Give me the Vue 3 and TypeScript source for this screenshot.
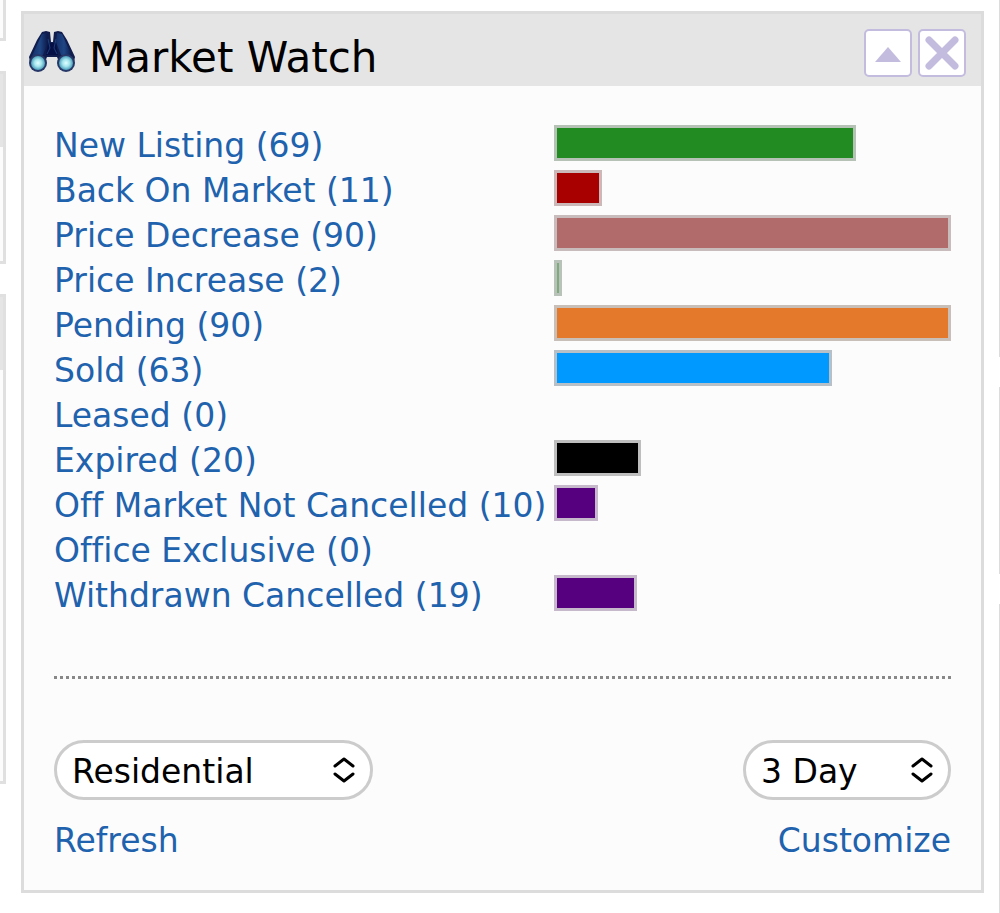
<script setup lang="ts">
import { ref } from 'vue'

interface Category {
  label: string
  count: number
  color: string
  edge: string
}

const categories: Category[] = [
  { label: 'New Listing', count: 69, color: '#228b22', edge: '#b7c2b7' },
  { label: 'Back On Market', count: 11, color: '#a80000', edge: '#cbb9b9' },
  { label: 'Price Decrease', count: 90, color: '#b26b6b', edge: '#c8bcbc' },
  { label: 'Price Increase', count: 2, color: '#7eaa7e', edge: '#b9c2b9' },
  { label: 'Pending', count: 90, color: '#e4792b', edge: '#c8bfb8' },
  { label: 'Sold', count: 63, color: '#0099ff', edge: '#b7bfc7' },
  { label: 'Leased', count: 0, color: '#808080', edge: '#c0c0c0' },
  { label: 'Expired', count: 20, color: '#000000', edge: '#bebebe' },
  { label: 'Off Market Not Cancelled', count: 10, color: '#560080', edge: '#c6b9cc' },
  { label: 'Office Exclusive', count: 0, color: '#808080', edge: '#c0c0c0' },
  { label: 'Withdrawn Cancelled', count: 19, color: '#560080', edge: '#c6b9cc' },
]

const peak = Math.max(...categories.map((c) => c.count))
const share = (count: number): string => `${Math.floor((count / peak) * 100)}%`

const propertyType = ref('Residential')
const period = ref('3 Day')
const collapsed = ref(false)
</script>

<template>
  <div class="board">
    <div class="side left" aria-hidden="true">
      <div class="stub first"></div>
      <div class="stub second"><div class="stub-head"></div></div>
      <div class="stub third"><div class="stub-head"></div></div>
    </div>

    <main class="widget">
      <header class="head">
        <svg class="logo" viewBox="0 0 48 44" aria-hidden="true">
          <defs>
            <radialGradient id="lens">
              <stop offset="0" stop-color="#e2ffff" />
              <stop offset="0.5" stop-color="#a5e6ee" />
              <stop offset="1" stop-color="#4d9db8" />
            </radialGradient>
            <linearGradient id="barrel">
              <stop offset="0" stop-color="#14306b" />
              <stop offset="0.5" stop-color="#1f4684" />
              <stop offset="1" stop-color="#0b1747" />
            </linearGradient>
          </defs>
          <path d="M14 2 L18 1 L22 2 L23 12 L25 12 L26 2 L30 1 L34 2 L39 10 L47 27 L45 36 L32 34 L29 27 L19 27 L16 34 L3 36 L1 27 L9 10 Z" fill="#101d4d" />
          <path d="M14 4 L19 3 L20 12 L15 25 L4 26 Z" fill="url(#barrel)" />
          <path d="M29 3 L34 4 L44 26 L33 25 L28 12 Z" fill="url(#barrel)" />
          <path d="M20 13 H28 L30 25 H18 Z" fill="#071044" />
          <path d="M20 9 L22 18 L19 24 M28 9 L26 18 L29 24" fill="none" stroke="#1c3f7c" stroke-width="1" />
          <circle cx="10" cy="33" r="9" fill="#263768" />
          <circle cx="38" cy="33" r="9" fill="#263768" />
          <circle cx="10" cy="33" r="7" fill="url(#lens)" />
          <circle cx="38" cy="33" r="7" fill="url(#lens)" />
        </svg>
        <h1>Market Watch</h1>
        <div class="tools">
          <button type="button" aria-label="Collapse" @click="collapsed = !collapsed">
            <svg viewBox="0 0 44 44" aria-hidden="true">
              <path d="M22 16 L35 31 H9 Z" fill="#c4bcde" />
            </svg>
          </button>
          <button type="button" aria-label="Close">
            <svg viewBox="0 0 44 44" aria-hidden="true">
              <path d="M9 9 L35 35 M35 9 L9 35" stroke="#c4bcde" stroke-width="7" stroke-linecap="round" />
            </svg>
          </button>
        </div>
      </header>

      <div v-show="!collapsed" class="body">
        <ul class="chart">
          <li v-for="c in categories" :key="c.label">
            <a href="#">{{ c.label }} ({{ c.count }})</a>
            <div class="track">
              <div
                v-if="c.count > 0"
                class="bar"
                :style="{ width: share(c.count), backgroundColor: c.color, borderColor: c.edge }"
              ></div>
            </div>
          </li>
        </ul>

        <hr />

        <div class="line">
          <div class="picker type">
            <select v-model="propertyType" aria-label="Property type">
              <option>Residential</option>
              <option>Commercial</option>
              <option>Land</option>
            </select>
            <svg viewBox="0 0 24 28" aria-hidden="true"><path d="M3 10 L12 3 L21 10 M3 18 L12 25 L21 18" /></svg>
          </div>
          <div class="picker period">
            <select v-model="period" aria-label="Period">
              <option>1 Day</option>
              <option>3 Day</option>
              <option>7 Day</option>
            </select>
            <svg viewBox="0 0 24 28" aria-hidden="true"><path d="M3 10 L12 3 L21 10 M3 18 L12 25 L21 18" /></svg>
          </div>
        </div>
        <div class="line links">
          <a href="#">Refresh</a>
          <a href="#">Customize</a>
        </div>
      </div>
    </main>

    <div class="side right" aria-hidden="true">
      <div class="edge upper"></div>
      <div class="edge middle"></div>
      <div class="edge lower"></div>
    </div>
  </div>
</template>

<style>
body {
  margin: 0;
  background: #fff;
}
</style>

<style scoped>
* {
  box-sizing: border-box;
}
.board {
  display: grid;
  grid-template-columns: 6px minmax(0, 1fr) 1px;
  column-gap: 15px;
  min-height: 100vh;
  font-family: Verdana, 'DejaVu Sans', sans-serif;
  font-size: 33px;
  font-variant-ligatures: none;
  line-height: 45px;
}
.side {
  display: flex;
  flex-direction: column;
  gap: 30px;
}
.stub {
  border: 3px solid #e0e0e0;
  border-left: 0;
  background: #fcfcfc;
}
.first {
  height: 41px;
  border-top: 0;
}
.second {
  height: 193px;
}
.third {
  height: 490px;
}
.stub-head {
  height: 73px;
  background: #e5e5e5;
}
.edge {
  background: #dcdcdc;
}
.upper {
  height: 357px;
}
.middle {
  height: 187px;
}
.lower {
  flex: 1;
}
.widget {
  align-self: start;
  margin: 11px 0 20px;
  border: 3px solid #dcdcdc;
  background: #fcfcfc;
}
.head {
  display: flex;
  align-items: flex-start;
  height: 72px;
  padding: 15px 15px 0 4px;
  background: #e5e5e5;
}
.logo {
  width: 48px;
  height: 44px;
  margin-top: 1px;
}
h1 {
  flex: 1;
  margin: 0;
  padding: 5px 0 0 13px;
  font-size: 42px;
  font-weight: 400;
  line-height: 48px;
  color: #000;
}
.tools {
  display: flex;
  gap: 6px;
}
.tools button {
  width: 48px;
  height: 48px;
  padding: 0;
  border: 2px solid #c4bcde;
  border-radius: 5px;
  background: #fff;
}
.tools svg {
  display: block;
  width: 100%;
}
.body {
  padding: 37px 30px 27px;
}
.chart {
  margin: 0;
  padding: 0;
  list-style: none;
}
.chart li {
  display: grid;
  grid-template-columns: 500fr 397fr;
  height: 45px;
}
a {
  color: #1f62ad;
  text-decoration: none;
  white-space: nowrap;
}
.track {
  min-width: 0;
  padding-top: 2px;
}
.bar {
  height: 36px;
  border: 3px solid;
}
hr {
  margin: 58px 0 61px;
  border: 0;
  border-top: 3px dotted #888;
}
.line {
  display: flex;
  justify-content: space-between;
}
.links {
  padding-top: 18px;
}
.picker {
  position: relative;
}
.type {
  width: 319px;
}
.period {
  width: 208px;
}
select {
  display: block;
  width: 100%;
  height: 60px;
  padding: 2px 50px 0 15px;
  border: 3px solid #ccc;
  border-radius: 30px;
  background: #fff;
  color: #000;
  font: inherit;
  appearance: none;
}
.picker svg {
  position: absolute;
  right: 17px;
  top: 16px;
  width: 24px;
  height: 28px;
  pointer-events: none;
}
.picker path {
  fill: none;
  stroke: #000;
  stroke-width: 3;
  stroke-linecap: round;
  stroke-linejoin: round;
}
</style>
